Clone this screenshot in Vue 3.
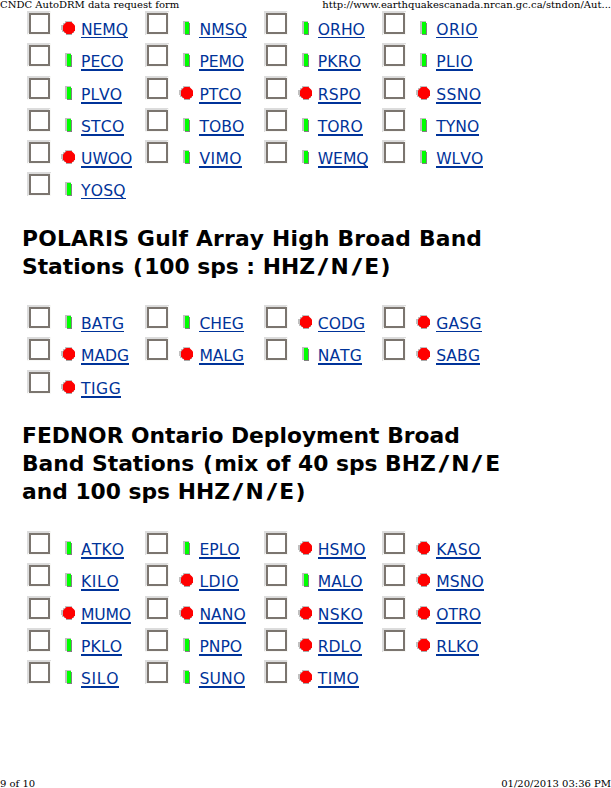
<script setup>
const extra = { I: 0.126, S: 0.049, K: 0.037, M: -0.02 }
const spacing = (name) =>
  ([...name].reduce((sum, c) => sum + (extra[c] || 0), 0) / name.length).toFixed(4) + 'em'

const parse = (rows) =>
  rows.map((row) =>
    row.split(' ').map((s) => ({ name: s.replace('*', ''), down: s.endsWith('*') }))
  )

const pieces = (text) => text.split(/([/()])/).filter(Boolean)
const pieceClass = (p) => ({ slash: p === '/', paren: p === '(' || p === ')' })

const sections = [
  {
    id: 'first',
    title: [],
    thin: [0, 5],
    rows: parse([
      'NEMQ* NMSQ ORHO ORIO',
      'PECO PEMO PKRO PLIO',
      'PLVO PTCO* RSPO* SSNO*',
      'STCO TOBO TORO TYNO',
      'UWOO* VIMO WEMQ WLVO',
      'YOSQ',
    ]),
  },
  {
    id: 'polaris',
    title: ['POLARIS Gulf Array High Broad Band', 'Stations (100 sps : HHZ/N/E)'],
    thin: [0],
    rows: parse(['BATG CHEG CODG* GASG*', 'MADG* MALG* NATG SABG*', 'TIGG*']),
  },
  {
    id: 'fednor',
    title: [
      'FEDNOR Ontario Deployment Broad',
      'Band Stations (mix of 40 sps BHZ/N/E',
      'and 100 sps HHZ/N/E)',
    ],
    thin: [],
    rows: parse([
      'ATKO EPLO HSMO* KASO*',
      'KILO LDIO* MALO MSNO*',
      'MUMO* NANO* NSKO* OTRO*',
      'PKLO PNPO RDLO* RLKO*',
      'SILO SUNO TIMO*',
    ]),
  },
]
</script>

<template>
  <div class="page">
    <header class="line head">
      <span class="doc">CNDC AutoDRM data request form</span>
      <span class="url">http://www.earthquakescanada.nrcan.gc.ca/stndon/Aut...</span>
    </header>
    <main>
      <section v-for="sec in sections" :key="sec.id" :class="sec.id">
        <h2 v-if="sec.title.length">
          <span v-for="(t, n) in sec.title" :key="t" class="tline" :class="'l' + n"><span v-for="(p, k) in pieces(t)" :key="k" :class="pieceClass(p)">{{ p }}</span></span>
        </h2>
        <div v-for="(row, i) in sec.rows" :key="i" class="row">
          <div v-for="st in row" :key="st.name" class="cell">
            <span class="check"><span class="box"></span></span>
            <svg v-if="st.down" class="mark" width="16" height="16">
              <path d="M5 1h7v3H5v8H2v-2H1V5h2V3h2z" fill="#c0c0c0" />
              <path d="M5 4h8v0h1v9h-2v2H6v-2H4V4z" fill="#a8a8a8" />
              <path d="M6.5 2h5L15 5.500v5L11.500 14h-5L3 10.500v-5z" fill="#ff0000" />
            </svg>
            <svg v-else class="mark" width="16" height="16" shape-rendering="crispEdges">
              <rect x="5" y="1" width="6" height="13" fill="#c0c0c0" />
              <rect x="7" y="3" width="5" height="12" fill="#808080" />
              <rect x="7" y="2" width="4" height="12" fill="#00ff00" />
            </svg>
            <a :class="{ thin: sec.thin.includes(i) }" :style="{ letterSpacing: spacing(st.name) }">{{ st.name }}</a>
          </div>
        </div>
      </section>
    </main>
    <footer class="line foot">
      <span class="pageno">9 of 10</span>
      <span class="date">01/20/2013 03:36 PM</span>
    </footer>
  </div>
</template>

<style>
body {
  background: #fff;
  overflow: hidden;
}
</style>

<style scoped>
.page {
  width: 611px;
  height: 788px;
  display: flex;
  flex-direction: column;
  overflow: hidden;
}
.line {
  display: flex;
  justify-content: space-between;
  font-family: "DejaVu Serif", serif;
  font-size: 10px;
  line-height: 12px;
  color: #000;
  white-space: nowrap;
}
.head {
  height: 11px;
  flex: none;
  line-height: 10px;
}
.foot {
  height: 10px;
  flex: none;
}
main {
  flex: 1;
  padding-left: 27px;
}
.first {
  height: 214px;
}
.polaris {
  height: 197px;
}
h2 {
  margin: 0 0 0 -5px;
  font: bold 21.8px/28px "DejaVu Sans", Verdana, sans-serif;
  font-kerning: none;
  color: #000;
}
.polaris h2 {
  height: 80px;
}
.fednor h2 {
  height: 109px;
}
.tline {
  display: block;
  white-space: nowrap;
}
.polaris .l0 {
  letter-spacing: 0.2px;
}
.slash {
  display: inline-block;
  margin: 0 3.8px;
  transform: scaleX(1.35);
}
.paren {
  padding: 0 1.2px;
}
.row {
  display: flex;
  height: 32.3px;
}
.cell {
  width: 118.4px;
  display: flex;
  align-items: flex-start;
}
.check {
  box-sizing: border-box;
  width: 24px;
  height: 24px;
  flex: none;
  padding: 2px 1px 1px 2px;
  background: linear-gradient(135deg, #dcdcdc 50%, #f8f8f6 50%);
}
.box {
  display: block;
  box-sizing: border-box;
  width: 21px;
  height: 21px;
  border: 2px solid #7b756f;
  background: #fff;
}
.mark {
  display: block;
  flex: none;
  margin: 9px 0 0 9px;
}
a {
  display: block;
  margin: 9px 0 0 5px;
  height: 17px;
  border-bottom: 2px solid #003399;
  font: 15.6px/20px "DejaVu Sans", Verdana, sans-serif;
  font-kerning: none;
  color: #003399;
  white-space: nowrap;
}
a.thin {
  border-bottom-width: 1px;
}
</style>
